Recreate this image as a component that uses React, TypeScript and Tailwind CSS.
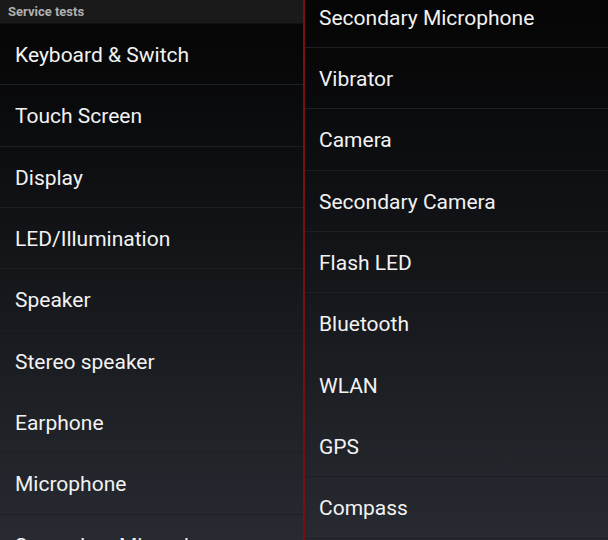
import React from 'react';

const leftItems = [
  'Keyboard & Switch',
  'Touch Screen',
  'Display',
  'LED/Illumination',
  'Speaker',
  'Stereo speaker',
  'Earphone',
  'Microphone',
  'Secondary Microphone',
];

const rightItems = [
  'Secondary Microphone',
  'Vibrator',
  'Camera',
  'Secondary Camera',
  'Flash LED',
  'Bluetooth',
  'WLAN',
  'GPS',
  'Compass',
];

const Row: React.FC<{ label: string; pad: string }> = ({ label, pad }) => (
  <div className={`h-[61.33px] shrink-0 flex items-center border-b border-[#1d2023] pt-[3px] text-[21px] text-[#f2f2f2] whitespace-nowrap ${pad}`}>
    {label}
  </div>
);

const App: React.FC = () => {
  return (
    <div
      className="w-[608px] h-[540px] overflow-hidden flex bg-gradient-to-b from-[#050505] via-[#14161a] to-[#272b31]"
      style={{ fontFamily: 'Roboto, "Noto Sans", sans-serif' }}
    >
      {/* Left pane */}
      <div className="w-[303px] shrink-0 flex flex-col overflow-hidden">
        <div className="h-[24px] shrink-0 bg-[#1a1a1a] border-b border-[#101010] flex items-center pt-[1px] px-2 text-[13px] font-bold text-[#b0b0b0]">
          Service tests
        </div>
        {leftItems.map((item) => (
          <Row key={item} label={item} pad="px-[15px]" />
        ))}
      </div>

      {/* Divider */}
      <div className="w-[2px] shrink-0 bg-[#7a0f12]" />

      {/* Right pane */}
      <div className="flex-1 flex flex-col overflow-hidden">
        <div className="-mt-[13.33px] flex flex-col">
          {rightItems.map((item) => (
            <Row key={item} label={item} pad="px-[14px]" />
          ))}
        </div>
      </div>
    </div>
  );
};

export default App;
